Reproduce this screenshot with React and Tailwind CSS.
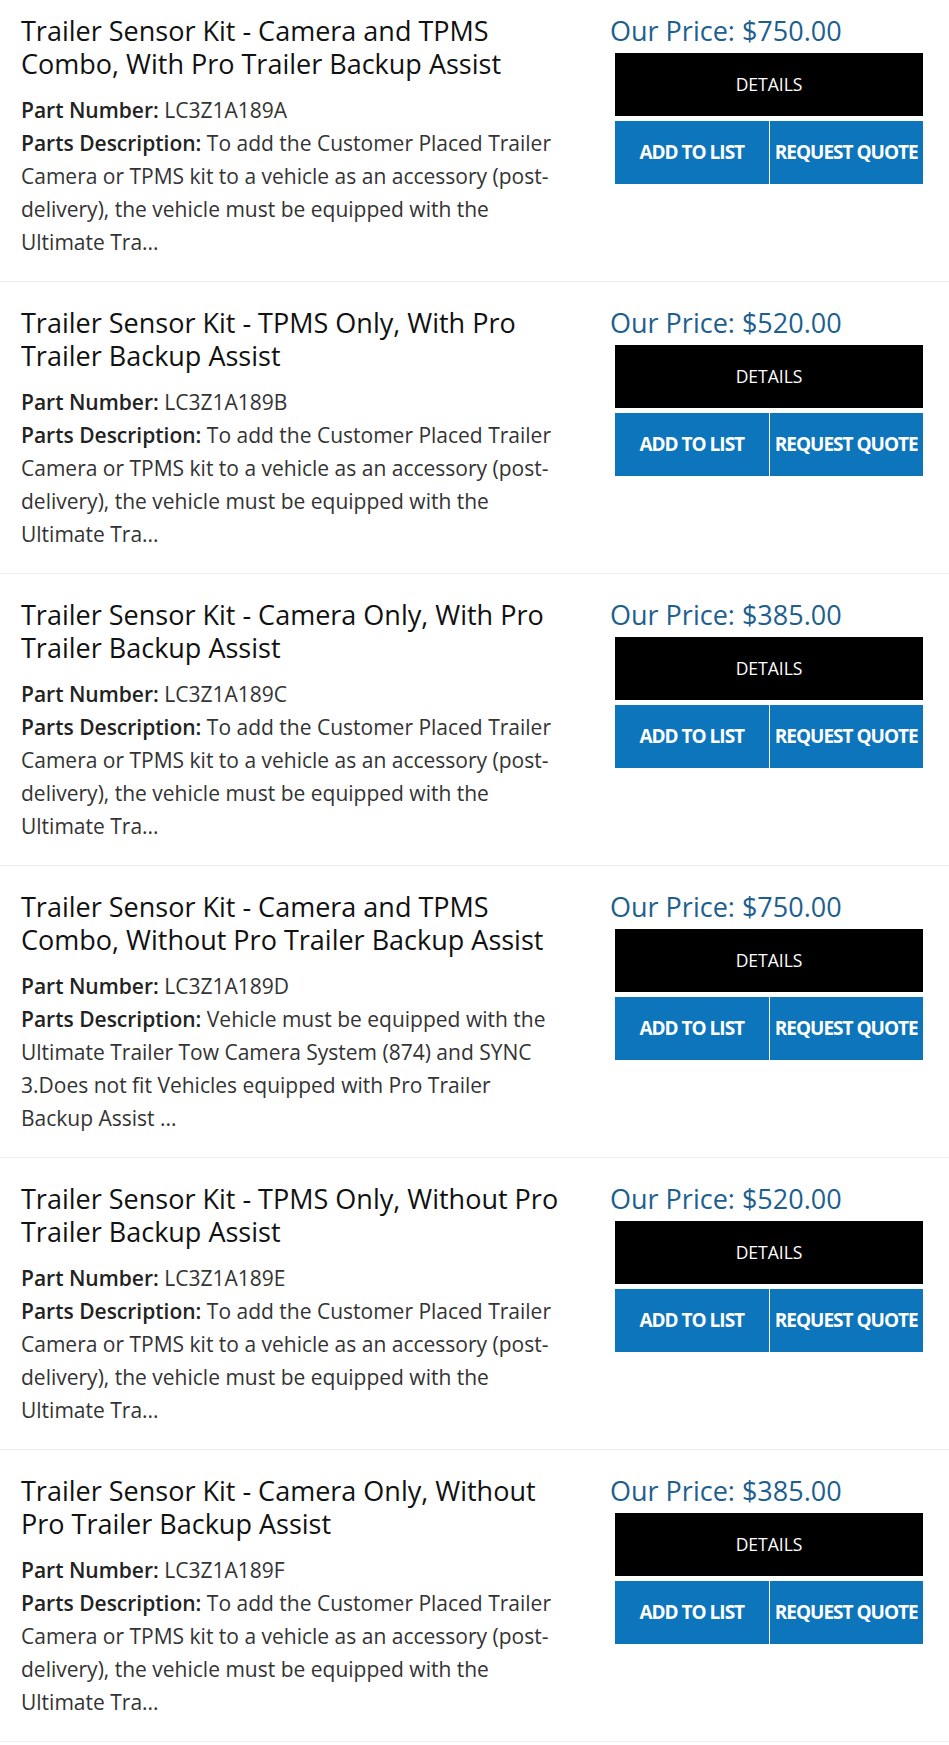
import React from 'react';

const defaultDesc =
  'To add the Customer Placed Trailer Camera or TPMS kit to a vehicle as an accessory (post-delivery), the vehicle must be equipped with the Ultimate Tra...';

const parts = [
  { title: 'Trailer Sensor Kit - Camera and TPMS Combo, With Pro Trailer Backup Assist', number: 'LC3Z1A189A', price: '$750.00', desc: defaultDesc },
  { title: 'Trailer Sensor Kit - TPMS Only, With Pro Trailer Backup Assist', number: 'LC3Z1A189B', price: '$520.00', desc: defaultDesc },
  { title: 'Trailer Sensor Kit - Camera Only, With Pro Trailer Backup Assist', number: 'LC3Z1A189C', price: '$385.00', desc: defaultDesc },
  {
    title: 'Trailer Sensor Kit - Camera and TPMS Combo, Without Pro Trailer Backup Assist',
    number: 'LC3Z1A189D',
    price: '$750.00',
    desc: 'Vehicle must be equipped with the Ultimate Trailer Tow Camera System (874) and SYNC 3.Does not fit Vehicles equipped with Pro Trailer Backup Assist ...',
  },
  { title: 'Trailer Sensor Kit - TPMS Only, Without Pro Trailer Backup Assist', number: 'LC3Z1A189E', price: '$520.00', desc: defaultDesc },
  { title: 'Trailer Sensor Kit - Camera Only, Without Pro Trailer Backup Assist', number: 'LC3Z1A189F', price: '$385.00', desc: defaultDesc },
];

const PartRow = ({ part }) => (
  <div className="flex px-[21px] pt-[24px] pb-[22px] first:pt-[14px] border-b border-[#eeeeee]">
    {/* Left: title + details */}
    <div className="w-[541px]">
      <h2 className="text-[27px] leading-[33px] font-normal text-[#111111] mb-[14px]">{part.title}</h2>
      <p className="text-[21px] leading-[33px] text-[#333333]">
        <span className="font-semibold text-[#222222]">Part Number:</span> {part.number}
      </p>
      <p className="text-[21px] leading-[33px] text-[#333333]">
        <span className="font-semibold text-[#222222]">Parts Description:</span> {part.desc}
      </p>
    </div>

    {/* Right: price + actions */}
    <div className="ml-[48px] w-[318px]">
      <div className="text-[27px] leading-[33px] text-[#1d5f8f]">Our Price: {part.price}</div>
      <div className="ml-[5px] mt-[6px] w-[308px]">
        <button className="w-full h-[63px] bg-black text-white text-[17.5px] uppercase flex items-center justify-center">
          Details
        </button>
        <div className="mt-[5px] grid grid-cols-2 gap-px bg-white">
          <button className="h-[63px] bg-[#0c75bb] text-white text-[19px] font-bold tracking-[-1px] flex items-center justify-center">
            ADD TO LIST
          </button>
          <button className="h-[63px] bg-[#0c75bb] text-white text-[19px] font-bold tracking-[-1px] flex items-center justify-center whitespace-nowrap">
            REQUEST QUOTE
          </button>
        </div>
      </div>
    </div>
  </div>
);

export default function App() {
  return (
    <div className="bg-white font-['Open_Sans',sans-serif] w-[949px]">
      {parts.map((part) => (
        <PartRow key={part.number} part={part} />
      ))}
    </div>
  );
}
